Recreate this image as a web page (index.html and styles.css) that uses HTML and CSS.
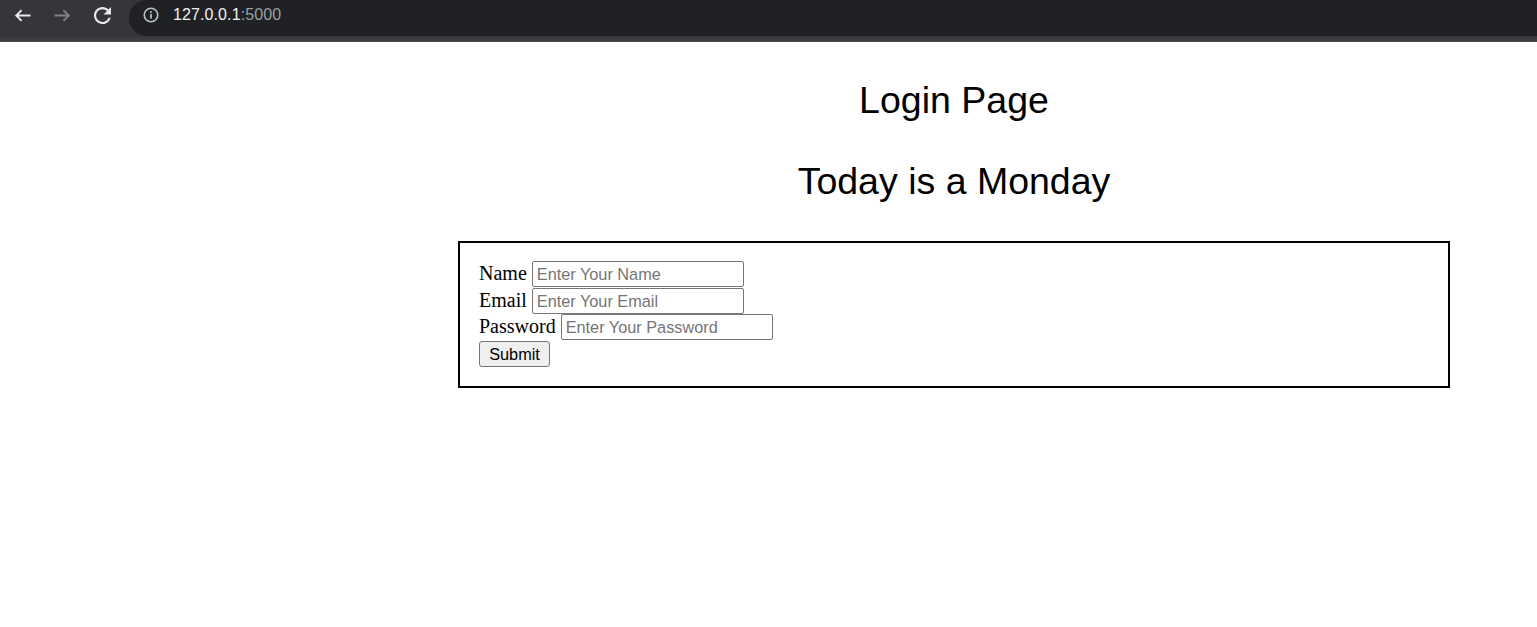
FILE: index.html
```html
<!DOCTYPE html>
<html lang="en">
<head>
<meta charset="utf-8">
<title>Login Page</title>
<link rel="stylesheet" href="styles.css">
</head>
<body>
<header class="chrome">
  <div class="toolbar">
    <div class="nav">
      <span class="navbtn">
        <svg width="17" height="13" viewBox="0 0 17 13"><path d="M16.5 6.5H2.2M7.6 1.1L2.2 6.5l5.4 5.4" fill="none" stroke="#e8eaed" stroke-width="1.9"/></svg>
      </span>
      <span class="navbtn">
        <svg width="17" height="13" viewBox="0 0 17 13"><path d="M0.5 6.5h14.3M9.4 1.1l5.4 5.4-5.4 5.4" fill="none" stroke="#808185" stroke-width="1.9"/></svg>
      </span>
      <span class="navbtn">
        <svg width="17" height="17" viewBox="4 4 16 16"><path d="M17.65 6.35C16.2 4.9 14.21 4 12 4c-4.42 0-7.990 3.58-7.99 8s3.57 8 7.99 8c3.73 0 6.84-2.55 7.73-6h-2.08c-.82 2.33-3.04 4-5.65 4-3.31 0-6-2.69-6-6s2.69-6 6-6c1.66 0 3.14.69 4.22 1.78L13 11h7V4l-2.35 2.35z" fill="#e8eaed"/></svg>
      </span>
    </div>
    <div class="omnibox">
      <div class="omni-inner">
        <svg class="info" width="16" height="16" viewBox="0 0 16 16"><circle cx="8" cy="8" r="6.8" fill="none" stroke="#bdc1c6" stroke-width="1.6"/><rect x="7.15" y="7" width="1.7" height="4.6" fill="#bdc1c6"/><rect x="7.15" y="4.2" width="1.7" height="1.7" fill="#bdc1c6"/></svg>
        <span class="url"><span class="host">127.0.0.1</span><span class="port">:5000</span></span>
      </div>
    </div>
  </div>
  <div class="toolbar-edge"></div>
</header>

<main class="main">
  <h1 class="title">Login Page</h1>
  <h1 class="subtitle">Today is a Monday</h1>
  <div class="card">
    <form class="form">
      <div class="row row-tall"><label class="label" for="name">Name</label><input class="field" id="name" type="text" placeholder="Enter Your Name"></div>
      <div class="row"><label class="label" for="email">Email</label><input class="field" id="email" type="text" placeholder="Enter Your Email"></div>
      <div class="row row-tall"><label class="label" for="password">Password</label><input class="field" id="password" type="password" placeholder="Enter Your Password"></div>
      <div class="row"><button class="submit" type="button">Submit</button></div>
    </form>
  </div>
</main>
</body>
</html>
```

FILE: styles.css
```css
html, body {
  margin: 0;
  padding: 0;
  background: #ffffff;
}

body {
  font-family: "Liberation Serif", "Times New Roman", serif;
  color: #000;
}

/* Browser chrome */
.chrome {
  height: 42px;
  background: #35363a;
}

.toolbar {
  height: 37px;
  display: flex;
  align-items: flex-start;
  background: #35363a;
}

.nav {
  display: flex;
  padding-left: 2px;
}

.navbtn {
  width: 40px;
  height: 30px;
  display: flex;
  align-items: center;
  justify-content: center;
}

.omnibox {
  flex: 1;
  height: 36px;
  margin-left: 7px;
  background: #202124;
  border-radius: 18px 0 0 18px;
}

.omni-inner {
  height: 30px;
  display: flex;
  align-items: center;
  padding-left: 14px;
}

.info {
  display: block;
}

.url {
  margin-left: 14px;
  font-family: "Liberation Sans", Arial, sans-serif;
  font-size: 16px;
  letter-spacing: 0.1px;
}

.host {
  color: #f1f3f4;
}

.port {
  color: #9aa0a6;
}

.toolbar-edge {
  height: 4px;
  background: #3c3d41;
  border-bottom: 1px solid #4b4c50;
}

/* Page */
.main {
  width: 992px;
  margin-left: 458px;
}

.title,
.subtitle {
  font-family: "Liberation Sans", Arial, sans-serif;
  font-weight: normal;
  font-size: 37.5px;
  line-height: 43px;
  text-align: center;
  margin: 0;
}

.title {
  margin-top: 37px;
}

.subtitle {
  margin-top: 38px;
}

.card {
  margin-top: 38px;
  border: 2px solid #000;
  padding: 18px 19px 19px;
  box-sizing: border-box;
  width: 992px;
}

.form {
  margin: 0;
}

.row {
  display: flex;
  align-items: baseline;
  height: 26px;
}

.row-tall {
  height: 27px;
}

.label {
  font-family: "Liberation Serif", "Times New Roman", serif;
  font-size: 20px;
  line-height: 23px;
  margin-right: 5px;
}

.field {
  box-sizing: border-box;
  width: 212px;
  height: 26px;
  padding: 1px 4px;
  margin: 0;
  border: 1px solid #767676;
  border-radius: 2px;
  font-family: "Liberation Sans", Arial, sans-serif;
  font-size: 16.3px;
  color: #000;
  background: #fff;
}

.field::placeholder {
  color: #757575;
}

.submit {
  box-sizing: border-box;
  width: 71px;
  height: 26px;
  padding: 0;
  margin: 0;
  border: 1px solid #767676;
  border-radius: 3px;
  background: #efefef;
  font-family: "Liberation Sans", Arial, sans-serif;
  font-size: 16.3px;
  color: #000;
}
```
